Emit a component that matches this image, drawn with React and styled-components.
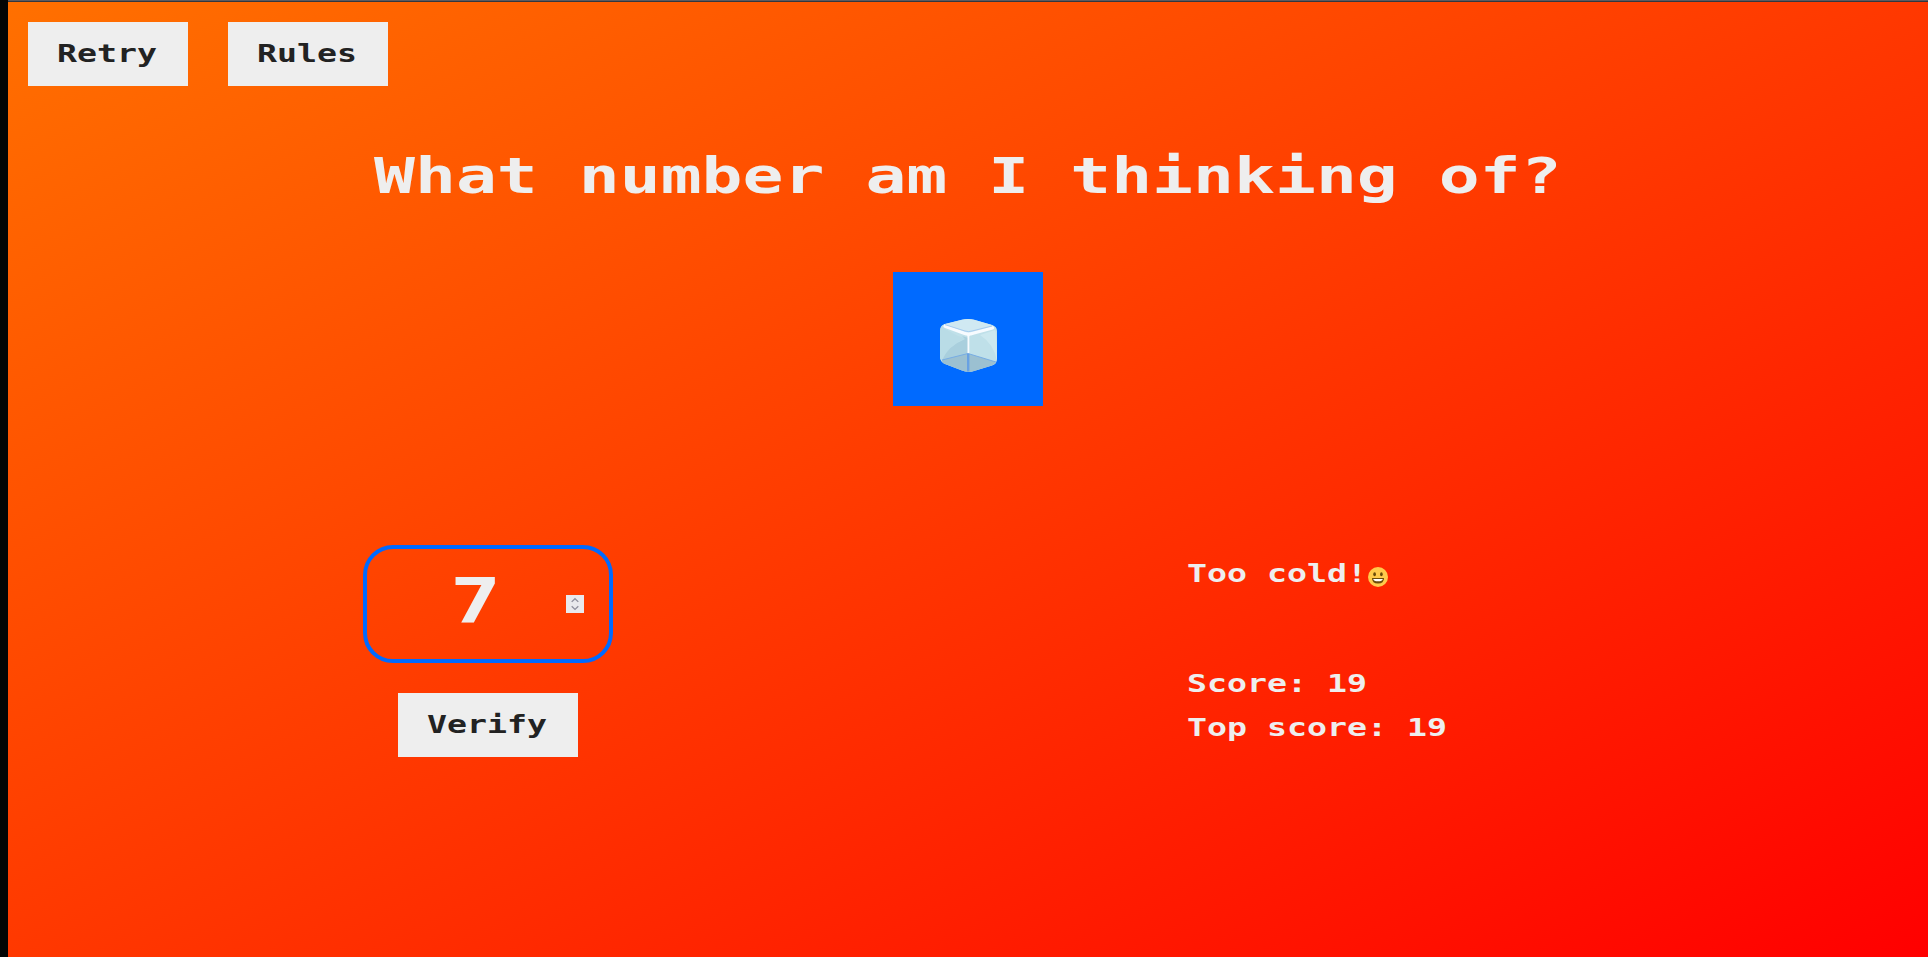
import React from "react";
import styled, { createGlobalStyle } from "styled-components";

const GlobalStyle = createGlobalStyle`
  *, *::before, *::after { box-sizing: border-box; }
  html, body { margin: 0; padding: 0; overflow: hidden; }
`;

const Page = styled.div`
  display: flex;
  flex-direction: column;
  height: 100vh;
  border-left: 8px solid #030504;
  background: #030504;
  color: #eee;
`;

const TopEdge = styled.div`
  flex: none;
  height: 2px;
  background: #33373f;
  border-top: 1px solid #5b5b60;
`;

const Game = styled.main`
  flex: 1;
  display: flex;
  flex-direction: column;
  background: linear-gradient(to bottom right, #ff7000, #ff0000);
`;

const LetterCells = styled.span`
  display: block;
  flex: none;
  width: ${(p) => p.$cell * p.$count}px;
  height: ${(p) => p.$line}px;
`;

const Letters = styled.span`
  display: block;
  width: max-content;
  font-family: "DejaVu Sans Mono", monospace;
  font-weight: 700;
  font-size: ${(p) => p.$cell * 1.2}px;
  line-height: ${(p) => p.$line}px;
  white-space: pre;
  transform: scaleX(1.3842);
  transform-origin: left center;
`;

function WideText({ children, cell = 20, line = 44 }) {
  return (
    <LetterCells $cell={cell} $line={line} $count={children.length}>
      <Letters $cell={cell} $line={line}>{children}</Letters>
    </LetterCells>
  );
}

const Toolbar = styled.header`
  display: flex;
  gap: 40px;
  padding: 20px 20px 0;
`;

const Button = styled.button`
  display: flex;
  height: 64px;
  padding: 10px 31px 10px 29px;
  border: 0;
  background: #eee;
  color: #222;
  cursor: pointer;
`;

const Title = styled.h1`
  display: flex;
  justify-content: center;
  margin: 60px 0 0;
`;

const Secret = styled.div`
  display: flex;
  align-items: center;
  justify-content: center;
  align-self: center;
  width: 150px;
  height: 134px;
  margin-top: 66px;
  padding: 13px 0 0 1px;
  background: #006aff;
`;

const Columns = styled.section`
  display: grid;
  grid-template-columns: 1fr 1fr;
  margin-top: 139px;
`;

const GuessColumn = styled.div`
  display: flex;
  flex-direction: column;
  align-items: center;
  gap: 30px;
`;

const GuessField = styled.div`
  display: flex;
  align-items: center;
  justify-content: space-between;
  width: 250px;
  height: 118px;
  padding: 0 25px 0 83px;
  border: 4px solid #006aff;
  border-radius: 30px;
`;

const Digit = styled.div`
  margin-top: -4px;
`;

const Spinner = styled.div`
  width: 18px;
  height: 18px;
  background: #e9e9ed;

  svg { display: block; }
`;

const StatusColumn = styled.div`
  display: flex;
  flex-direction: column;
  gap: 66px;
  padding: 7px 0 0 219px;
`;

const Message = styled.div`
  display: flex;
  align-items: center;

  svg { margin-top: 6px; margin-left: 1px; }
`;

function IceCube() {
  return (
    <svg width="57" height="53" viewBox="0 0 57 53">
      <path d="M4 5.3 22 .8Q28 -.6 34 .8L52 6Q57 7.500 57 12V40Q57 45 52 46.500L34 51.900Q28 54 22 51.500L5 45Q0 43 0 38V12Q0 7 4 5.300Z" fill="#bfe0e9" />
      <path d="M4 6Q0 7 0 13V38Q0 41 2 41 9 26 25 19.500L17 16.500 5 10Z" fill="#b9dce6" />
      <path d="M2 41Q8 27 25 20L22 17 28.500 19V35Z" fill="#a9cfdd" />
      <path d="M40 16 55 11Q57 15 57 42Q54 25 40 16Z" fill="#cce8ef" />
      <path d="M2 41 28 34.500 56 43Q55 45.500 52 46.500L34 51.900Q28 54 22 51.500L5 45Q2 44 2 41Z" fill="#9bc0d1" />
      <path d="M4 5.300 22 .8Q28 -.6 34 .8L52 6 54 8 31 13.500Q28 14.500 25 13.500L5 7Z" fill="#d0e9f2" />
      <path d="M5 7.200 24 14.200Q28.500 16 33 14.200L52.500 9" fill="none" stroke="#f7fbff" strokeWidth="3.200" strokeLinecap="round" strokeLinejoin="round" />
      <path d="M24 14Q28 15 28.500 20Q29 15 33 14Z" fill="#f7fbff" />
      <path d="M5 5.700 25 12Q28.500 13.200 32 12L52 7" fill="none" stroke="#8fbdec" strokeWidth=".7" />
      <path d="M28.400 16V35" stroke="#f7fbff" strokeWidth="1.800" />
      <path d="M2 41 28 34.500 56 43" fill="none" stroke="#72a9e5" strokeWidth=".9" />
      <path d="M28.200 34.500V52.500" stroke="#68a1e3" strokeWidth="2.400" />
    </svg>
  );
}

function Grin() {
  return (
    <svg width="20" height="20" viewBox="0 0 20 20">
      <circle cx="10" cy="10" r="10" fill="#ffca4b" />
      <ellipse cx="6.600" cy="7.300" rx="1.350" ry="2" fill="#6b4b09" />
      <ellipse cx="13.400" cy="7.300" rx="1.350" ry="2" fill="#6b4b09" />
      <path d="M4 11.100H16Q16 16.600 10 16.600T4 11.100Z" fill="#6b4b09" />
      <path d="M5.200 12H14.800Q14.400 14.300 10 14.300T5.200 12Z" fill="#fff" />
    </svg>
  );
}

function SpinArrows() {
  return (
    <svg width="18" height="18" viewBox="0 0 18 18" fill="none" stroke="#8f8f9d" strokeWidth="1.300">
      <path d="M5.700 6.900 9 3.700 12.300 6.900M5.700 11.200 9 14.400 12.300 11.200" />
    </svg>
  );
}

export default function App() {
  return (
    <>
      <GlobalStyle />
      <Page>
        <TopEdge />
        <Game>
          <Toolbar>
            <Button><WideText>Retry</WideText></Button>
            <Button><WideText>Rules</WideText></Button>
          </Toolbar>
          <Title>
            <WideText cell={40.96} line={60}>What number am I thinking of?</WideText>
          </Title>
          <Secret><IceCube /></Secret>
          <Columns>
            <GuessColumn>
              <GuessField>
                <Digit><WideText cell={51.2} line={70}>7</WideText></Digit>
                <Spinner><SpinArrows /></Spinner>
              </GuessField>
              <Button><WideText>Verify</WideText></Button>
            </GuessColumn>
            <StatusColumn>
              <Message>
                <WideText>Too cold!</WideText>
                <Grin />
              </Message>
              <div>
                <WideText>Score: 19</WideText>
                <WideText>Top score: 19</WideText>
              </div>
            </StatusColumn>
          </Columns>
        </Game>
      </Page>
    </>
  );
}
